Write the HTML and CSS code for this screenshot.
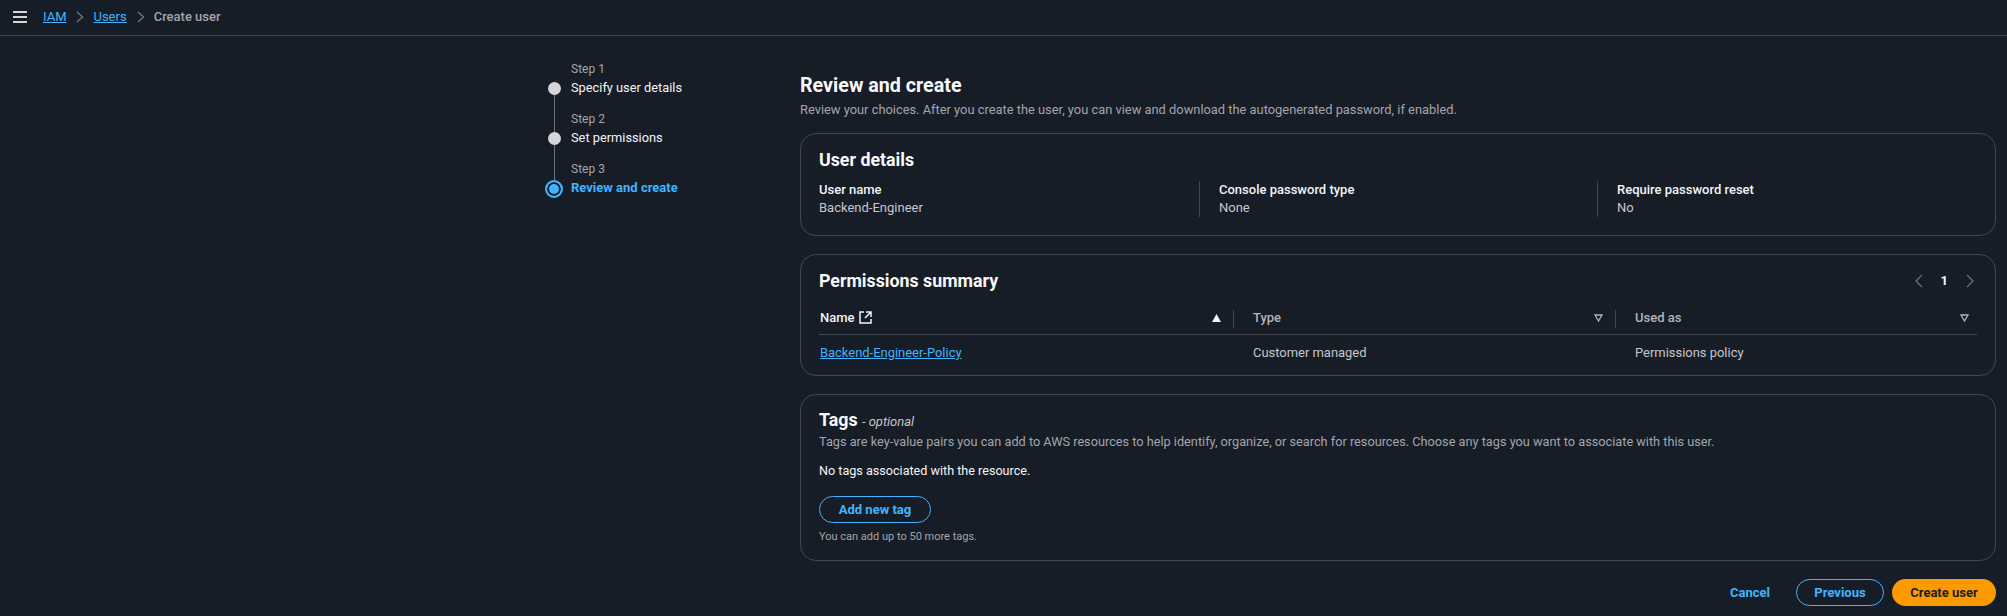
FILE: index.html
```html
<!DOCTYPE html>
<html lang="en">
<head>
    <meta charset="UTF-8">
    <title>Create user</title>
    <link rel="stylesheet" href="styles.css">
</head>
<body>
    <header class="topbar">
        <svg class="menu-icon" width="14" height="12" viewBox="0 0 14 12"><path d="M0 1h14M0 6h14M0 11h14" stroke="#d5d5da" stroke-width="2"/></svg>
        <a class="crumb" href="#">IAM</a>
        <svg class="crumb-sep" width="8" height="12" viewBox="0 0 8 12"><path d="M1 1l5.500 5L1 11" fill="none" stroke="#6f7078" stroke-width="1.500"/></svg>
        <a class="crumb" href="#">Users</a>
        <svg class="crumb-sep" width="8" height="12" viewBox="0 0 8 12"><path d="M1 1l5.500 5L1 11" fill="none" stroke="#6f7078" stroke-width="1.500"/></svg>
        <span class="crumb-current">Create user</span>
    </header>

    <div class="layout">
        <ol class="steps">
            <li class="step">
                <span class="step-label">Step 1</span>
                <span class="step-name"><i class="dot"></i>Specify user details</span>
            </li>
            <li class="step">
                <span class="step-label">Step 2</span>
                <span class="step-name"><i class="dot"></i>Set permissions</span>
            </li>
            <li class="step step-active">
                <span class="step-label">Step 3</span>
                <span class="step-name"><i class="dot"></i>Review and create</span>
            </li>
        </ol>

        <main class="content">
            <h1>Review and create</h1>
            <p class="lead">Review your choices. After you create the user, you can view and download the autogenerated password, if enabled.</p>

            <section class="card card-details">
                <h2>User details</h2>
                <div class="details">
                    <div class="detail">
                        <strong>User name</strong>
                        <span>Backend-Engineer</span>
                    </div>
                    <div class="detail">
                        <strong>Console password type</strong>
                        <span>None</span>
                    </div>
                    <div class="detail">
                        <strong>Require password reset</strong>
                        <span>No</span>
                    </div>
                </div>
            </section>

            <section class="card card-permissions">
                <div class="card-head">
                    <h2>Permissions summary</h2>
                    <div class="pager">
                        <svg width="9" height="14" viewBox="0 0 9 14"><path d="M8 1L2 7l6 6" fill="none" stroke="#6f7078" stroke-width="1.300"/></svg>
                        <b>1</b>
                        <svg width="9" height="14" viewBox="0 0 9 14"><path d="M1 1l6 6-6 6" fill="none" stroke="#6f7078" stroke-width="1.300"/></svg>
                    </div>
                </div>
                <div class="table">
                    <div class="th th-name">
                        <span class="th-title">Name
                            <svg width="13" height="13" viewBox="0 0 13 13"><path d="M5 1H1v11h11V8M7 1h5v5M12 1L6 7" fill="none" stroke="#f3f3f7" stroke-width="1.500"/></svg>
                        </span>
                        <svg width="9" height="8" viewBox="0 0 9 8"><path d="M4.500 0L9 8H0z" fill="#f3f3f7"/></svg>
                    </div>
                    <div class="th">
                        <span class="th-title">Type</span>
                        <svg width="9" height="8" viewBox="0 0 9 8"><path d="M1 1h7L4.500 7z" fill="none" stroke="#b4b4bb" stroke-width="1.300"/></svg>
                    </div>
                    <div class="th th-last">
                        <span class="th-title">Used as</span>
                        <svg width="9" height="8" viewBox="0 0 9 8"><path d="M1 1h7L4.500 7z" fill="none" stroke="#b4b4bb" stroke-width="1.300"/></svg>
                    </div>
                    <div class="td"><a href="#">Backend-Engineer-Policy</a></div>
                    <div class="td td-pad">Customer managed</div>
                    <div class="td td-pad">Permissions policy</div>
                </div>
            </section>

            <section class="card card-tags">
                <h2>Tags <em>- optional</em></h2>
                <p class="tags-desc">Tags are key-value pairs you can add to AWS resources to help identify, organize, or search for resources. Choose any tags you want to associate with this user.</p>
                <p class="tags-empty">No tags associated with the resource.</p>
                <button class="btn btn-outline btn-tag">Add new tag</button>
                <p class="tags-hint">You can add up to 50 more tags.</p>
            </section>

            <footer class="actions">
                <a class="btn-link" href="#">Cancel</a>
                <button class="btn btn-outline btn-prev">Previous</button>
                <button class="btn btn-primary">Create user</button>
            </footer>
        </main>
    </div>
</body>
</html>
```

FILE: styles.css
```css
* {
    box-sizing: border-box;
}

body {
    margin: 0;
    height: 616px;
    overflow: hidden;
    background-color: #161d26;
    color: #c6c6cd;
    font-family: Roboto, Arial, sans-serif;
    font-size: 13px;
    line-height: 18px;
}

a {
    color: #42b4ff;
}

h1, h2, p, ol {
    margin: 0;
    padding: 0;
}

/* Top bar */
.topbar {
    display: flex;
    align-items: center;
    height: 36px;
    padding: 0 0 2px 13px;
    border-bottom: 1px solid #424650;
}

.menu-icon {
    margin-right: 16px;
}

.crumb-sep {
    margin: 0 9px 0 10px;
}

.crumb-current {
    color: #a4a4ad;
    font-weight: 500;
}

/* Steps */
.layout {
    display: grid;
    grid-template-columns: 255px 1196px;
    padding-left: 545px;
}

.steps {
    list-style: none;
    padding-top: 24px;
}

.step {
    position: relative;
    display: flex;
    flex-direction: column;
    height: 50px;
    padding-left: 26px;
    color: #f3f3f7;
}

.step-label {
    color: #a4a4ad;
    font-size: 12px;
    line-height: 19px;
}

.step-name {
    display: block;
    font-size: 12.800px;
    line-height: 17px;
}

.dot {
    position: absolute;
    left: 3px;
    top: 22px;
    width: 13px;
    height: 13px;
    border-radius: 50%;
    background-color: #d5d5da;
}

.step::after {
    content: "";
    position: absolute;
    left: 9px;
    top: 35px;
    width: 1px;
    height: 37px;
    background-color: #6f7078;
}

.step-active::after {
    display: none;
}

.step-active .step-name {
    color: #42b4ff;
    font-size: 13px;
    font-weight: 700;
}

.step-active .dot {
    left: 0;
    top: 20px;
    width: 18px;
    height: 18px;
    background-color: #42b4ff;
    border: 2px solid #42b4ff;
    box-shadow: inset 0 0 0 2px #161d26;
}

/* Content */
.content {
    padding-top: 35px;
}

h1 {
    color: #f9f9fa;
    font-size: 19.700px;
    font-weight: 700;
    line-height: 30px;
}

.lead {
    margin-bottom: 14px;
    color: #a4a4ad;
    font-size: 12.870px;
}

.card {
    margin-bottom: 18px;
    padding: 0 18px;
    border: 1px solid #424650;
    border-radius: 16px;
}

h2 {
    color: #f9f9fa;
    font-size: 17.800px;
    font-weight: 700;
    line-height: 24px;
}

/* User details */
.card-details {
    height: 103px;
    padding-top: 14px;
}

.details {
    display: grid;
    grid-template-columns: 380px 398px 1fr;
    margin-top: 9px;
}

.detail {
    display: flex;
    flex-direction: column;
    height: 36px;
    border-left: 1px solid #424650;
    padding-left: 19px;
}

.detail:first-child {
    border-left: none;
    padding-left: 0;
}

.detail strong {
    color: #f3f3f7;
    font-weight: 500;
}

/* Permissions table */
.card-permissions {
    height: 122px;
    padding-top: 14px;
}

.card-head {
    display: flex;
    justify-content: space-between;
    align-items: center;
}

.pager {
    display: flex;
    align-items: center;
    gap: 18px;
    margin-right: 2px;
    color: #f9f9fa;
}

.table {
    display: grid;
    grid-template-columns: 415px 382px 361px;
    width: 1158px;
    margin-top: 12px;
}

.th {
    display: flex;
    justify-content: space-between;
    align-items: center;
    height: 30px;
    padding: 0 13px 4px 19px;
    border-bottom: 1px solid #424650;
    font-weight: 500;
    color: #b4b4bb;
    position: relative;
}

.th-name {
    padding-left: 1px;
    color: #f3f3f7;
}

.th-title {
    display: flex;
    align-items: center;
    gap: 4px;
}

.th-last {
    padding-right: 8px;
}

.th:not(.th-last)::after {
    content: "";
    position: absolute;
    right: 0;
    top: 5px;
    width: 1px;
    height: 18px;
    background-color: #424650;
}

.td {
    padding: 9px 1px;
    font-size: 12.950px;
}

.td-pad {
    padding-left: 19px;
}

/* Tags */
.card-tags {
    height: 167px;
    padding-top: 13px;
}

.card-tags em {
    color: #c6c6cd;
    font-size: 13px;
    font-weight: 400;
}

.tags-desc {
    margin-top: -1px;
    color: #a4a4ad;
    font-size: 12.730px;
}

.tags-empty {
    margin-top: 11px;
    color: #f3f3f7;
    font-size: 12.600px;
}

.tags-hint {
    margin-top: 6px;
    color: #a4a4ad;
    font-size: 11px;
    line-height: 16px;
}

/* Buttons */
.btn {
    height: 27px;
    padding: 0;
    border-radius: 14px;
    font-family: inherit;
    font-size: 13px;
    font-weight: 700;
}

.btn-outline {
    background: transparent;
    border: 1px solid #42b4ff;
    color: #42b4ff;
}

.btn-tag {
    width: 112px;
    margin-top: 16px;
}

.btn-prev {
    width: 88px;
    margin-right: 8px;
}

.btn-primary {
    width: 104px;
    background-color: #ff9900;
    border: none;
    color: #161d26;
}

.btn-link {
    margin-right: 26px;
    font-weight: 700;
    text-decoration: none;
}

.actions {
    display: flex;
    justify-content: flex-end;
    align-items: center;
}
```
